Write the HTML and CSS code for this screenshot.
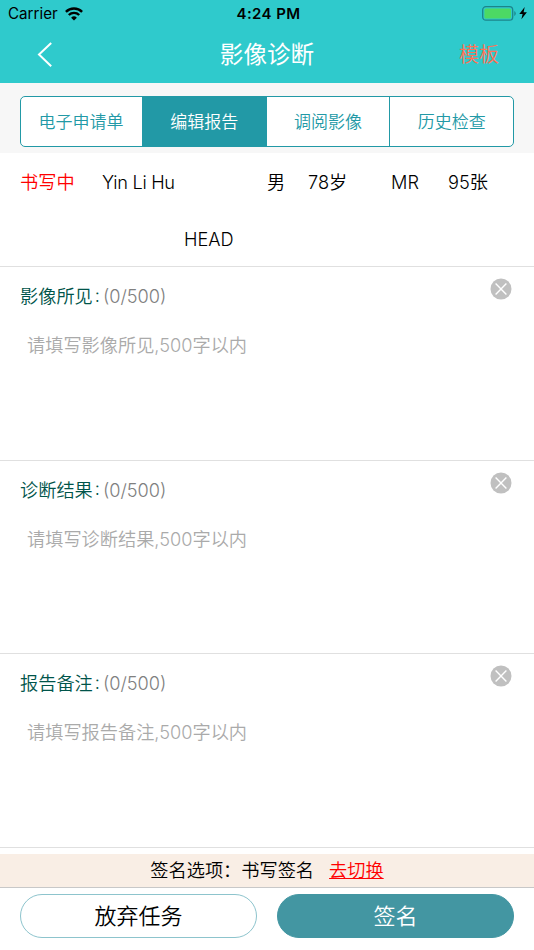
FILE: index.html
```html
<!DOCTYPE html>
<html lang="zh-CN">
<head>
    <meta charset="UTF-8">
    <meta name="viewport" content="width=device-width, initial-scale=1.0">
    <title>影像诊断</title>
    <link rel="stylesheet" href="styles.css">
</head>
<body>
    <header class="header">
        <div class="status-bar">
            <div class="carrier">
                <span>Carrier</span>
                <svg class="wifi" width="18" height="14" viewBox="0 0 18 14" fill="none" stroke="#000" stroke-width="2.4">
                    <path d="M0.9 4.9a11.5 11.5 0 0 1 16.2 0"/>
                    <path d="M3.8 8a7.4 7.4 0 0 1 10.4 0"/>
                    <path d="M9 13.6L6.1 10.7a4.1 4.1 0 0 1 5.8 0z" fill="#000" stroke="none"/>
                </svg>
            </div>
            <div class="clock">4:24 PM</div>
            <div class="power">
                <svg width="46" height="16" viewBox="0 0 46 16">
                    <rect x="0.7" y="0.7" width="30" height="13.5" rx="3.2" fill="none" stroke="#1c858a" stroke-width="1.3"/>
                    <rect x="2.4" y="2.5" width="26.6" height="10" rx="1.6" fill="#4cd964"/>
                    <path d="M32.3 5.1a2.7 2.7 0 0 1 0 4.8z" fill="#1c858a"/>
                    <path d="M42.7 1L37.3 7.9h3.3l-1.2 5.4 5.5-7h-3.3z" fill="#000"/>
                </svg>
            </div>
        </div>
        <div class="nav-bar">
            <a class="back" href="#">
                <svg width="16" height="26" viewBox="0 0 16 26" fill="none" stroke="#fff" stroke-width="2">
                    <path d="M14.2 1L2 12.5l12.2 11.7"/>
                </svg>
            </a>
            <h1>影像诊断</h1>
            <a class="template" href="#">模板</a>
        </div>
    </header>

    <nav class="tabs-wrap">
        <div class="tabs">
            <a class="tab" href="#">电子申请单</a>
            <a class="tab active" href="#">编辑报告</a>
            <a class="tab" href="#">调阅影像</a>
            <a class="tab" href="#">历史检查</a>
        </div>
    </nav>

    <section class="patient">
        <div class="patient-row">
            <span class="state">书写中</span>
            <span>Yin Li Hu</span>
            <span>男</span>
            <span>78岁</span>
            <span>MR</span>
            <span>95张</span>
        </div>
        <div class="body-part">HEAD</div>
    </section>

    <main>
        <section class="field">
            <div class="field-head">
                <span class="field-name">影像所见<span class="colon">:</span></span>
                <span class="count">(0/500)</span>
                <svg class="clear" width="22" height="22" viewBox="0 0 22 22">
                    <circle cx="11" cy="11" r="10.5" fill="#c0c0c0"/>
                    <path d="M5.6 5.6l10.8 10.8M16.4 5.6L5.6 16.4" stroke="#fff" stroke-width="1.4"/>
                </svg>
            </div>
            <p class="placeholder">请填写影像所见,500字以内</p>
        </section>
        <section class="field">
            <div class="field-head">
                <span class="field-name">诊断结果<span class="colon">:</span></span>
                <span class="count">(0/500)</span>
                <svg class="clear" width="22" height="22" viewBox="0 0 22 22">
                    <circle cx="11" cy="11" r="10.5" fill="#c0c0c0"/>
                    <path d="M5.6 5.6l10.8 10.8M16.4 5.6L5.6 16.4" stroke="#fff" stroke-width="1.4"/>
                </svg>
            </div>
            <p class="placeholder">请填写诊断结果,500字以内</p>
        </section>
        <section class="field">
            <div class="field-head">
                <span class="field-name">报告备注<span class="colon">:</span></span>
                <span class="count">(0/500)</span>
                <svg class="clear" width="22" height="22" viewBox="0 0 22 22">
                    <circle cx="11" cy="11" r="10.5" fill="#c0c0c0"/>
                    <path d="M5.6 5.6l10.8 10.8M16.4 5.6L5.6 16.4" stroke="#fff" stroke-width="1.4"/>
                </svg>
            </div>
            <p class="placeholder">请填写报告备注,500字以内</p>
        </section>
    </main>

    <footer>
        <div class="sign-option">
            <span>签名选项：书写签名</span>
            <a class="switch" href="#">去切换</a>
        </div>
        <div class="actions">
            <button class="btn" type="button">放弃任务</button>
            <button class="btn btn-primary" type="button">签名</button>
        </div>
    </footer>
</body>
</html>
```

FILE: styles.css
```css
* {
    box-sizing: border-box;
}
body {
    margin: 0;
    height: 950px;
    display: flex;
    flex-direction: column;
    overflow: hidden;
    background: #fff;
    color: #000;
    font-family: Inter, "Noto Sans CJK SC", sans-serif;
    font-size: 18.2px;
    font-weight: 360;
    line-height: 26px;
}
a {
    color: inherit;
    text-decoration: none;
}
svg {
    display: block;
}

/* header */
.header {
    height: 83px;
    background: #2fcacc;
}
.status-bar {
    height: 27px;
    padding: 0 6px 0 8px;
    display: grid;
    grid-template-columns: 1fr auto 1fr;
    align-items: center;
    font-size: 15.2px;
    font-weight: 400;
}
.carrier {
    display: flex;
    align-items: center;
    gap: 7px;
}
.clock {
    padding-left: 1px;
    font-size: 15px;
    font-weight: 600;
    letter-spacing: 0.4px;
}
.power {
    justify-self: end;
}
.nav-bar {
    height: 56px;
    padding: 0 35px 0 37px;
    display: grid;
    grid-template-columns: 1fr auto 1fr;
    align-items: center;
}
h1 {
    margin: 0 2px 0 0;
    color: #fff;
    font-size: 23.6px;
    font-weight: 400;
}
.template {
    justify-self: end;
    color: #ff7256;
    font-size: 20px;
}

/* tabs */
.tabs-wrap {
    height: 70px;
    padding: 13px 20px 7px;
    background: #f7f7f7;
}
.tabs {
    height: 51px;
    display: flex;
    border: 1px solid #2299a6;
    border-radius: 5px;
    background: #fff;
    overflow: hidden;
}
.tab {
    flex: 1;
    display: flex;
    align-items: center;
    justify-content: center;
    border-right: 1px solid #2299a6;
    color: #2299a6;
    font-size: 17px;
}
.tab:first-child {
    flex: none;
    width: 122px;
    padding-right: 1px;
}
.tab:last-child {
    border-right: none;
}
.tab.active {
    background: #2299a6;
    color: #fff;
}

/* patient info */
.patient {
    height: 113px;
    padding: 16px 20px 0;
}
.patient-row {
    display: grid;
    grid-template-columns: 82px 165px 41px 83px 57px 1fr;
}
.patient-row span:nth-child(2) {
    letter-spacing: -0.3px;
}
.state {
    color: #f00;
}
.body-part {
    margin-top: 31px;
    padding-left: 164px;
}

/* report fields */
.field {
    height: 193.6px;
    padding: 11px 22px 0 20px;
    border-top: 1px solid #e0e0e0;
}
.field-head {
    display: flex;
}
.field-name,
.count {
    margin-top: 5px;
}
.field-name {
    color: #00544a;
}
.colon {
    position: relative;
    top: -1.5px;
    margin-left: 2px;
}
.count {
    margin-left: 3px;
    color: #808080;
}
.clear {
    margin-left: auto;
}
.placeholder {
    margin: 23px 0 0 7px;
    color: #aaa;
}

/* footer */
footer {
    border-top: 1px solid #e0e0e0;
    padding-top: 6px;
}
.sign-option {
    height: 34px;
    display: flex;
    justify-content: center;
    align-items: center;
    gap: 15px;
    background: #f9eee5;
    border-bottom: 1px solid #c8c8c8;
}
.switch {
    color: #f00;
    text-decoration: underline;
}
.actions {
    padding: 6px 20px;
    display: flex;
    gap: 20px;
}
.btn {
    flex: 1;
    height: 44px;
    padding: 0 0 3px;
    border: 1px solid #8dc4cd;
    border-radius: 22px;
    background: #fff;
    color: #000;
    font-family: inherit;
    font-size: 22px;
    font-weight: 360;
}
.btn-primary {
    border-color: #4396a2;
    background: #4396a2;
    color: #fff;
}
```
